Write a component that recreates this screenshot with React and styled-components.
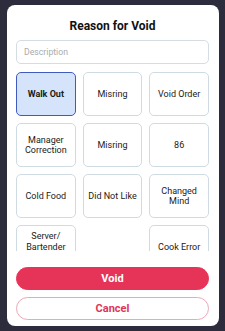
import React from "react";
import styled, { createGlobalStyle } from "styled-components";

const Global = createGlobalStyle`
  html, body { margin: 0; padding: 0; background: #2d2c3c; }
  body { font-family: Roboto, "Noto Sans", Arial, sans-serif; }
  * { box-sizing: border-box; }
`;

const Screen = styled.div`
  width: 225px;
  height: 331px;
  background: #2d2c3c;
  padding: 5px 6px 5px 7px;
  overflow: hidden;
`;

const Card = styled.div`
  width: 212px;
  height: 321px;
  background: #ffffff;
  border-radius: 8px;
  padding: 11px 10px 6px 9px;
  display: flex;
  flex-direction: column;
`;

const Title = styled.h1`
  margin: 0;
  flex-shrink: 0;
  height: 20px;
  font-size: 12px;
  line-height: 20px;
  font-weight: 700;
  color: #111;
  text-align: center;
`;

const Input = styled.input`
  margin-top: 4px;
  flex-shrink: 0;
  height: 24px;
  width: 100%;
  border: 1px solid #d4dde3;
  border-radius: 5px;
  padding: 0 7px;
  font-family: inherit;
  font-size: 8.7px;
  color: #333;
  outline: none;
  &::placeholder { color: #a7acb0; }
`;

const Scroll = styled.div`
  margin-top: 8px;
  flex-shrink: 0;
  height: 179px;
  overflow: hidden;
`;

const Grid = styled.div`
  display: grid;
  grid-template-columns: repeat(3, 1fr);
  column-gap: 7px;
  row-gap: 7px;
`;

const Reason = styled.button`
  height: 44px;
  border-radius: 5px;
  border: 1px solid ${(p) => (p.$selected ? "#3e5bbd" : "#cfdbe2")};
  background: ${(p) => (p.$selected ? "#d5e4fb" : "#fff")};
  font-family: inherit;
  font-size: 9px;
  line-height: 10.5px;
  font-weight: ${(p) => (p.$selected ? 700 : 400)};
  color: #1a1a1a;
  padding: 0 3px;
  display: flex;
  align-items: center;
  justify-content: center;
  text-align: center;
  visibility: ${(p) => (p.$empty ? "hidden" : "visible")};
`;

const Actions = styled.div`
  margin-top: 16px;
  flex-shrink: 0;
  display: flex;
  flex-direction: column;
  gap: 7px;
`;

const ActionButton = styled.button`
  height: 23px;
  border-radius: 12px;
  font-family: inherit;
  font-size: 11px;
  font-weight: 700;
  border: 1px solid ${(p) => (p.$primary ? "#e63458" : "#e8a9b8")};
  background: ${(p) => (p.$primary ? "#e63458" : "#fff")};
  color: ${(p) => (p.$primary ? "#fff" : "#e03558")};
`;

const reasons = [
  { label: "Walk Out", selected: true },
  { label: "Misring" },
  { label: "Void Order" },
  { label: "Manager Correction" },
  { label: "Misring" },
  { label: "86" },
  { label: "Cold Food" },
  { label: "Did Not Like" },
  { label: "Changed Mind" },
  { label: "Server/ Bartender Error" },
  { label: "", empty: true },
  { label: "Cook Error" },
];

export default function App() {
  return (
    <Screen>
      <Global />
      <Card>
        <Title>Reason for Void</Title>
        <Input placeholder="Description" />
        <Scroll>
          <Grid>
            {reasons.map((r, i) => (
              <Reason key={i} $selected={r.selected} $empty={r.empty}>
                {r.label}
              </Reason>
            ))}
          </Grid>
        </Scroll>
        <Actions>
          <ActionButton $primary>Void</ActionButton>
          <ActionButton>Cancel</ActionButton>
        </Actions>
      </Card>
    </Screen>
  );
}
